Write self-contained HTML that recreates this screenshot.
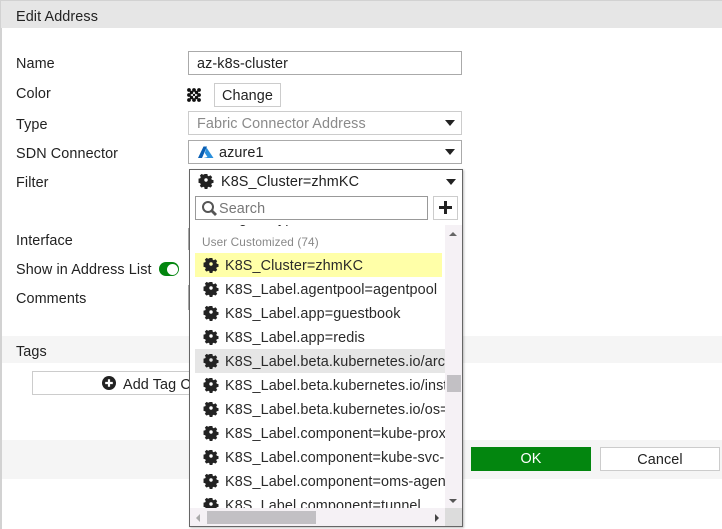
<!DOCTYPE html>
<html>
<head>
<meta charset="utf-8">
<style>
html,body{margin:0;padding:0;background:#fff}
#p{position:relative;width:722px;height:529px;overflow:hidden;background:#fff;font-family:"Liberation Sans",sans-serif;font-size:14.4px;color:#222;letter-spacing:.1px}
#p div{position:absolute;box-sizing:border-box;white-space:nowrap}
.l{left:16px;height:20px;line-height:22px}
.box{left:188px;width:274px;height:24px;border:1px solid #aaa;background:#fff;line-height:24px}
.car{width:0;height:0;border-left:5.5px solid transparent;border-right:5.5px solid transparent;border-top:6px solid #222}
.it{left:225px;height:24px;line-height:26px;color:#2a2a2a}
svg{position:absolute;overflow:visible}
</style>
</head>
<body>
<div id="p">
<svg width="0" height="0" style="position:absolute"><defs>
<g id="g"><path fill-rule="evenodd" fill="#222" d="M5.4 0h3.2l.4 2 1.3.6 1.8-1.1 2.1 2.100-1.100 1.800.6 1.300 2 .4v3.200l-2 .4-.6 1.300 1.100 1.800-2.100 2.100-1.800-1.100-1.300.6-.4 2H5.400l-.4-2-1.300-.6-1.800 1.100-2.100-2.100 1.100-1.800-.6-1.300-2-.4V5.400l2-.4.6-1.300-1.100-1.800 2.100-2.100 1.800 1.100 1.300-.6zM7 5a2 2 0 1 0 0 4 2 2 0 0 0 0-4z" transform="translate(1 1) scale(.86)"/></g>
</defs></svg>

<div style="left:0;top:0;width:2px;height:529px;background:#d2d2d2"></div>
<div style="left:0;top:0;width:722px;height:28px;background:#e6e6e6;border-top:1px solid #d2d2d2;border-left:1px solid #d2d2d2"></div>
<div class="l" style="top:6px">Edit Address</div>

<div class="l" style="top:53px">Name</div>
<div class="l" style="top:83px">Color</div>
<div class="l" style="top:114px">Type</div>
<div class="l" style="top:143px">SDN Connector</div>
<div class="l" style="top:172px">Filter</div>
<div class="l" style="top:230px">Interface</div>
<div class="l" style="top:259px">Show in Address List</div>
<div class="l" style="top:288px">Comments</div>

<div class="box" style="top:51px;padding-left:8px">az-k8s-cluster</div>

<svg style="left:187px;top:88px" width="15" height="15" fill="#111">
<circle cx="2" cy="2" r="1.9"/><circle cx="7" cy="2" r="1.9"/><circle cx="12" cy="2" r="1.9"/>
<circle cx="4.500" cy="4.500" r="1.700"/><circle cx="9.500" cy="4.500" r="1.700"/>
<circle cx="2" cy="7" r="1.900"/><circle cx="7" cy="7" r="1.200"/><circle cx="12" cy="7" r="1.900"/>
<circle cx="4.500" cy="9.500" r="1.700"/><circle cx="9.500" cy="9.500" r="1.700"/>
<circle cx="2" cy="12" r="1.900"/><circle cx="7" cy="12" r="1.900"/><circle cx="12" cy="12" r="1.900"/>
</svg>
<div style="left:214px;top:83px;width:67px;height:24px;border:1px solid #ccc;background:#fff;text-align:center;line-height:25px">Change</div>

<div class="box" style="top:111px;border-color:#ccc;color:#8a8a8a;padding-left:8px">Fabric Connector Address</div>
<div class="car" style="left:445px;top:120px"></div>

<div class="box" style="top:140px;padding-left:30px">azure1</div>
<svg style="left:198px;top:146px" width="16" height="13">
<path fill="#0a5fb4" d="M5.500 0.500H9L4 12H0z"/>
<path fill="#2a8fdc" d="M8.500 1.500L15.500 12H5.500l4-1L6.800 7z"/>
</svg>
<div class="car" style="left:445px;top:149px"></div>

<div style="left:188px;top:228px;width:2px;height:22px;background:#aaa"></div>
<div style="left:188px;top:285px;width:2px;height:25px;background:#aaa"></div>

<div style="left:159px;top:262px;width:20px;height:14px;background:#03860f;border-radius:7px"></div>
<div style="left:167px;top:263px;width:11px;height:11px;background:#fff;border-radius:50%;margin-top:.5px"></div>

<div style="left:2px;top:336px;width:720px;height:27px;background:#f5f5f5"></div>
<div class="l" style="top:341px">Tags</div>
<div style="left:32px;top:371px;width:170px;height:24px;border:1px solid #ccc;background:#fff"></div>
<svg style="left:102px;top:376px" width="14" height="14"><circle cx="7" cy="7" r="7" fill="#222"/><path d="M7 3.200v7.600M3.200 7h7.600" stroke="#fff" stroke-width="2.200"/></svg>
<div style="left:123px;top:374px;height:20px;line-height:22px">Add Tag Category</div>

<div style="left:2px;top:440px;width:720px;height:39px;background:#f5f5f5"></div>
<div style="left:471px;top:447px;width:120px;height:24px;background:#03860f;color:#fff;text-align:center;line-height:25px">OK</div>
<div style="left:600px;top:447px;width:120px;height:24px;background:#fff;border:1px solid #ccc;text-align:center;line-height:24px">Cancel</div>

<!-- dropdown -->
<div style="left:189px;top:169px;width:274px;height:358px;background:#fff;border:1px solid #666;box-shadow:1px 1px 2px rgba(0,0,0,.25);overflow:hidden"></div>
<svg style="left:199px;top:173px" width="15" height="15"><use href="#g"/></svg>
<div style="left:221px;top:172px;height:20px;line-height:20px">K8S_Cluster=zhmKC</div>
<div class="car" style="left:446px;top:179px"></div>

<div style="left:195px;top:196px;width:233px;height:24px;border:1px solid #999;background:#fff"></div>
<svg style="left:202px;top:201px" width="15" height="15" fill="none" stroke="#555" stroke-width="2"><circle cx="6" cy="6" r="5"/><path d="M9.500 9.500L14 14" stroke-width="2.800"/></svg>
<div style="left:219px;top:198px;height:20px;line-height:23px;color:#777">Search</div>
<div style="left:433px;top:196px;width:25px;height:24px;border:1px solid #ccc;background:#fff"></div>
<svg style="left:439px;top:201px" width="13" height="13"><path d="M6.500 0v13M0 6.500h13" stroke="#222" stroke-width="3"/></svg>

<!-- list -->
<div style="left:190px;top:225px;width:272px;height:283px;overflow:hidden">
  <div class="it" style="left:49px;top:-19px">g</div>
  <div class="it" style="left:88px;top:-19px">yp</div>
  <div style="left:12px;top:7px;height:20px;line-height:20px;color:#888;font-size:11.800px">User Customized (74)</div>
  <div style="left:5px;top:28px;width:247px;height:24px;background:#ffffa8"></div>
  <div style="left:5px;top:124px;width:250px;height:24px;background:#e6e6e6"></div>
  <div style="left:0;top:0;width:255px;height:283px;overflow:hidden">
    <svg style="left:14px;top:32px" width="15" height="15"><use href="#g"/></svg>
    <svg style="left:14px;top:56px" width="15" height="15"><use href="#g"/></svg>
    <svg style="left:14px;top:80px" width="15" height="15"><use href="#g"/></svg>
    <svg style="left:14px;top:104px" width="15" height="15"><use href="#g"/></svg>
    <svg style="left:14px;top:128px" width="15" height="15"><use href="#g"/></svg>
    <svg style="left:14px;top:152px" width="15" height="15"><use href="#g"/></svg>
    <svg style="left:14px;top:176px" width="15" height="15"><use href="#g"/></svg>
    <svg style="left:14px;top:200px" width="15" height="15"><use href="#g"/></svg>
    <svg style="left:14px;top:224px" width="15" height="15"><use href="#g"/></svg>
    <svg style="left:14px;top:248px" width="15" height="15"><use href="#g"/></svg>
    <svg style="left:14px;top:272px" width="15" height="15"><use href="#g"/></svg>
    <div class="it" style="left:35px;top:28px">K8S_Cluster=zhmKC</div>
    <div class="it" style="left:35px;top:52px">K8S_Label.agentpool=agentpool</div>
    <div class="it" style="left:35px;top:76px">K8S_Label.app=guestbook</div>
    <div class="it" style="left:35px;top:100px">K8S_Label.app=redis</div>
    <div class="it" style="left:35px;top:124px">K8S_Label.beta.kubernetes.io/arch=amd64</div>
    <div class="it" style="left:35px;top:148px">K8S_Label.beta.kubernetes.io/instance-type</div>
    <div class="it" style="left:35px;top:172px">K8S_Label.beta.kubernetes.io/os=linux</div>
    <div class="it" style="left:35px;top:196px">K8S_Label.component=kube-proxy</div>
    <div class="it" style="left:35px;top:220px">K8S_Label.component=kube-svc-redirect</div>
    <div class="it" style="left:35px;top:244px">K8S_Label.component=oms-agent</div>
    <div class="it" style="left:35px;top:268px">K8S_Label.component=tunnel</div>
  </div>
</div>

<!-- scrollbars -->
<div style="left:445px;top:225px;width:17px;height:283px;background:#f5f1f5"></div>
<div style="left:447px;top:375px;width:14px;height:17px;background:#c2c0c4"></div>
<div style="left:449px;top:232px;width:0;height:0;border-left:4px solid transparent;border-right:4px solid transparent;border-bottom:4px solid #666"></div>
<div style="left:449px;top:499px;width:0;height:0;border-left:4px solid transparent;border-right:4px solid transparent;border-top:4px solid #555"></div>
<div style="left:190px;top:508px;width:255px;height:18px;background:#f5f1f5"></div>
<div style="left:445px;top:508px;width:17px;height:18px;background:#dcdcdc"></div>
<div style="left:207px;top:511px;width:109px;height:13px;background:#c2c0c4"></div>
<div style="left:196px;top:514px;width:0;height:0;border-top:4px solid transparent;border-bottom:4px solid transparent;border-right:4px solid #aaa"></div>
<div style="left:435px;top:514px;width:0;height:0;border-top:4px solid transparent;border-bottom:4px solid transparent;border-left:4px solid #444"></div>
</div>
</body>
</html>
